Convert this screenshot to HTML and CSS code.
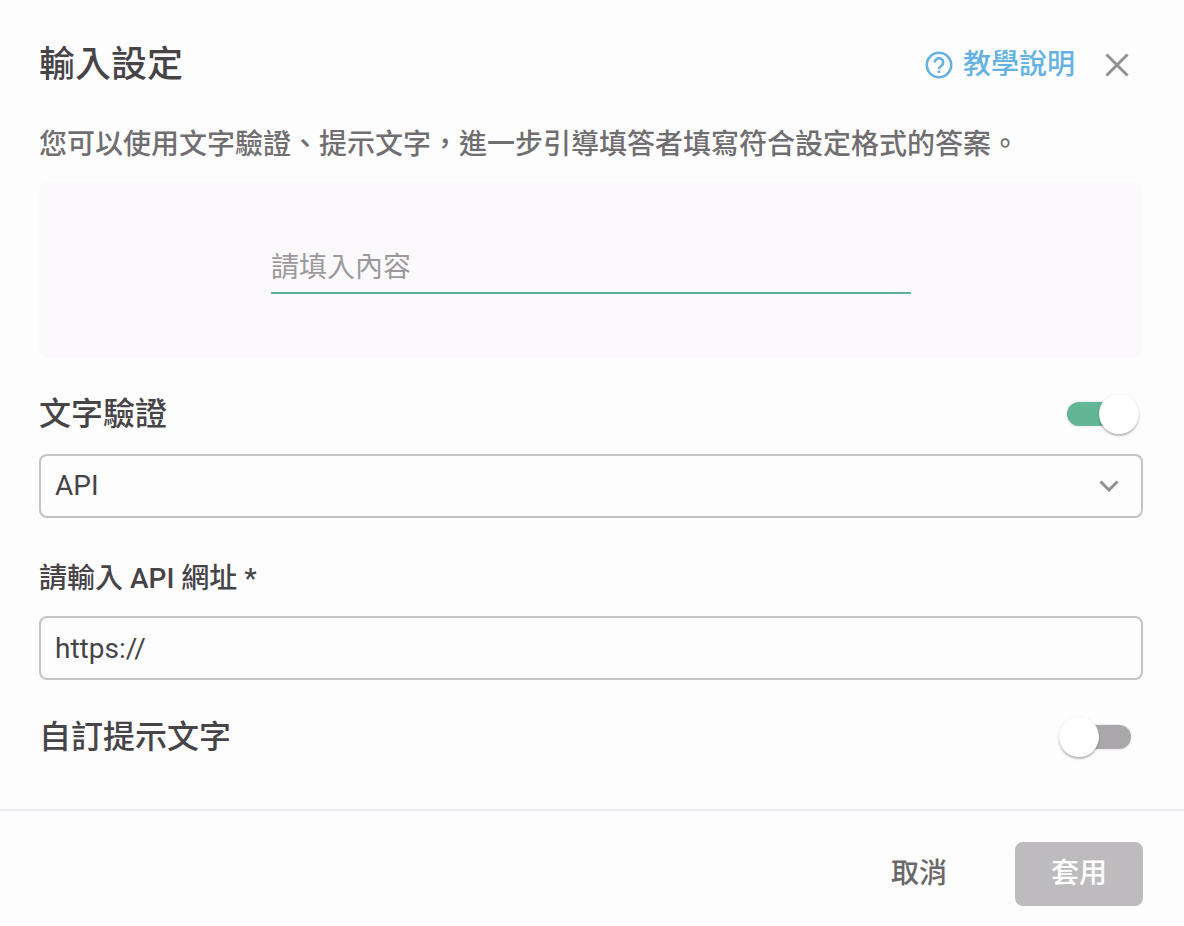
FILE: index.html
```html
<!DOCTYPE html>
<html lang="zh-Hant">
<head>
  <meta charset="utf-8">
  <meta name="viewport" content="width=device-width, initial-scale=1">
  <title>輸入設定</title>
  <link rel="stylesheet" href="styles.css">
</head>

<body>
<form class="dialog">
  <div class="dialog-body">
    <header class="dialog-header">
      <h1 class="title">輸入設定</h1>
      <a class="help-link" href="#">
        <svg class="help-icon" viewBox="0 0 28 28" aria-hidden="true">
          <circle cx="14" cy="14" r="12.2" />
          <path d="M9.8 11.4a4.2 4.2 0 1 1 6.6 3.4c-1.6 1.1-2.4 1.7-2.4 3.2" />
          <path d="M14 19.4v2.6" />
        </svg>
        教學說明
      </a>
      <button class="close-button" type="button" aria-label="關閉">
        <svg viewBox="0 0 24 24" aria-hidden="true"><path d="M1.5 1.5l21 21M22.5 1.5l-21 21" /></svg>
      </button>
    </header>

    <p class="description">您可以使用文字驗證、提示文字，進一步引導填答者填寫符合設定格式的答案。</p>

    <!-- preview of the question -->
    <div class="preview">
      <input class="preview-input" type="text" placeholder="請填入內容" aria-label="請填入內容">
    </div>

    <div class="setting-row">
      <label class="setting-label" for="validation">文字驗證</label>
      <input class="switch" id="validation" type="checkbox" role="switch" checked>
    </div>

    <div class="select-wrapper">
      <select class="field" aria-label="文字驗證">
        <option selected>API</option>
      </select>
      <svg class="chevron" viewBox="0 0 20 12" aria-hidden="true"><path d="M1.5 1.5l8.5 8.5 8.5-8.5" /></svg>
    </div>

    <label class="field-label" for="api-url">請輸入 API 網址 *</label>
    <input class="field" id="api-url" type="text" value="https://">

    <div class="setting-row">
      <label class="setting-label" for="hint">自訂提示文字</label>
      <input class="switch" id="hint" type="checkbox" role="switch">
    </div>
  </div>

  <footer class="dialog-footer">
    <button class="button button-cancel" type="button">取消</button>
    <button class="button button-apply" type="submit" disabled>套用</button>
  </footer>
</form>
</body>
</html>
```
FILE: styles.css
```css
* {
  box-sizing: border-box;
}

body {
  margin: 0;
  background: #fefdfe;
  color: #464447;
  font-family: Roboto, "Noto Sans CJK TC", sans-serif;
  font-size: 28px;
  line-height: 40px;
}

button,
input,
select {
  font: inherit;
  color: inherit;
}

button {
  border: none;
  background: none;
  cursor: pointer;
}

svg {
  display: block;
  fill: none;
  stroke: currentColor;
}

.dialog-body {
  padding: 41px 41px 52px 39px;
}

.dialog-header {
  display: flex;
  align-items: center;
}

.title {
  flex: 1;
  margin: 0;
  font-size: 36px;
  font-weight: 500;
  line-height: 48px;
}

.help-link {
  display: flex;
  align-items: center;
  gap: 10px;
  color: #63b2e3;
  font-weight: 500;
  text-decoration: none;
}

.help-icon {
  width: 28px;
  height: 28px;
  stroke-width: 2.6;
}

.close-button {
  width: 48px;
  height: 48px;
  margin: 0 2px 0 18px;
  padding: 12px;
  color: #929092;
}

.close-button svg {
  stroke-width: 3;
}

.description {
  margin: 36px 0 17px;
  color: #706e70;
  font-weight: 500;
}

.preview {
  display: flex;
  justify-content: center;
  padding: 56px 24px 63px;
  border-radius: 8px;
  background: #fbf9fc;
}

.preview-input {
  width: 100%;
  max-width: 640px;
  height: 56px;
  padding: 4px 0 0;
  border: none;
  border-bottom: 2px solid #5fb394;
  border-radius: 0;
  outline: none;
  background: none;
}

.preview-input::placeholder {
  color: #9b999b;
  opacity: 1;
}

.setting-row {
  display: flex;
  align-items: center;
  justify-content: space-between;
  margin-top: 37px;
}

.setting-label {
  font-size: 32px;
  font-weight: 500;
}

/* track is ::before, knob is ::after */
.switch {
  appearance: none;
  position: relative;
  width: 80px;
  height: 40px;
  margin: 0 4px 0 0;
  cursor: pointer;
}

.switch::before,
.switch::after {
  content: "";
  position: absolute;
}

.switch::before {
  top: 8px;
  left: 8px;
  width: 64px;
  height: 24px;
  border-radius: 12px;
  background: #a9a7a9;
  box-shadow: 0 0 2px 1px #eae8eb;
}

.switch::after {
  top: 0;
  left: 0;
  width: 40px;
  height: 40px;
  border-radius: 50%;
  background: #fff;
  box-shadow: 0 2px 2px rgba(0, 0, 0, 0.26), 0 0 2px rgba(0, 0, 0, 0.08);
}

.switch:checked::before {
  background: #62b595;
}

.switch:checked::after {
  left: 40px;
}

.select-wrapper {
  position: relative;
  margin-top: 20px;
}

.field {
  appearance: none;
  display: block;
  width: 100%;
  height: 64px;
  padding: 0 14px;
  border: 2px solid #c4c2c5;
  border-radius: 8px;
  background: #fefdfe;
}

.chevron {
  position: absolute;
  top: 26px;
  right: 24px;
  width: 20px;
  height: 12px;
  color: #929092;
  stroke-width: 3;
  pointer-events: none;
}

.field-label {
  display: block;
  margin: 41px 0 17px;
  font-weight: 500;
}

.dialog-footer {
  display: flex;
  justify-content: flex-end;
  gap: 32px;
  padding: 31px 41px 20px 39px;
  border-top: 2px solid #efedf1;
}

.button {
  width: 128px;
  height: 64px;
  padding: 0;
  border-radius: 8px;
  font-weight: 500;
}

.button-cancel {
  color: #6a686b;
}

.button-apply {
  background: #bdbbbe;
  color: #fff;
}
```
